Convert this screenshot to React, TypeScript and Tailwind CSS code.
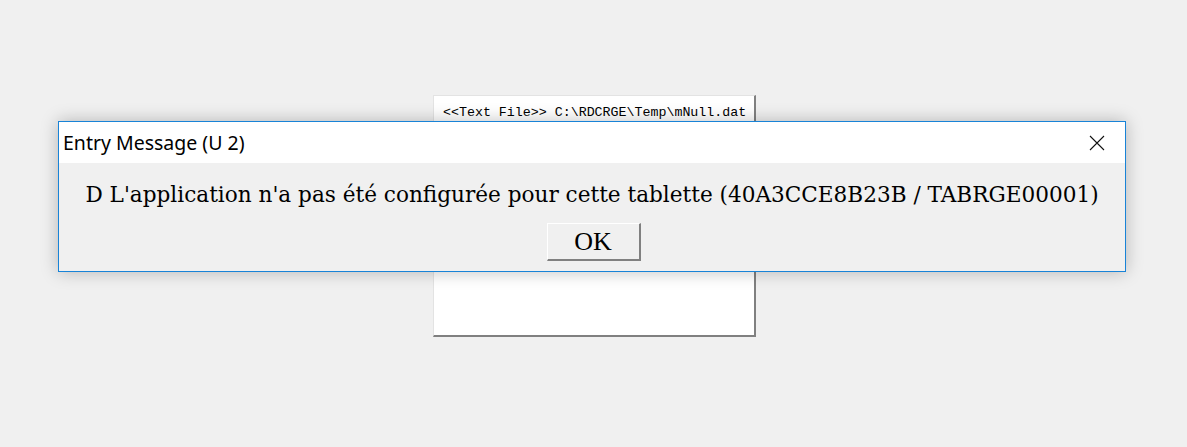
export default function App() {
  return (
    <div className="relative h-[447px] w-[1187px] overflow-hidden bg-[#f0f0f0]">
      {/* window behind the dialog */}
      <div className="ml-[433px] pt-[95px]">
        <div className="h-[242px] w-[323px] border-t border-l border-t-[#e3e3e3] border-l-[#e3e3e3] border-r-2 border-b-2 border-r-[#808080] border-b-[#808080] bg-white">
          <div
            className="pl-[9px] pt-[10px] text-[13.3px] leading-none text-[#000]"
            style={{ fontFamily: '"Liberation Mono", "Courier New", monospace' }}
          >
            {'<<Text File>> C:\\RDCRGE\\Temp\\mNull.dat'}
          </div>
        </div>
      </div>

      {/* message dialog */}
      <div className="absolute left-[58px] top-[121px] w-[1068px] border border-solid border-[#1883d7] bg-[#f0f0f0] shadow-[0_0_16px_rgba(0,0,0,0.25)]">
        <div className="flex h-[41px] items-center justify-between bg-white pl-[4px] pr-[20px]">
          <span
            className="text-[19.5px] text-black"
            style={{ fontFamily: '"Noto Sans", "Open Sans", sans-serif' }}
          >
            Entry Message (U 2)
          </span>
          <svg width="16" height="16" viewBox="0 0 16 16">
            <path d="M1 1 L15 15 M15 1 L1 15" stroke="#111" strokeWidth="1.1" fill="none" />
          </svg>
        </div>
        <div className="flex h-[108px] flex-col items-center pt-[19px]">
          <div
            className="text-[21.6px] leading-[26px] text-black whitespace-nowrap"
            style={{ fontFamily: '"DejaVu Serif", "Liberation Serif", serif' }}
          >
            D L'application n'a pas été configurée pour cette tablette (40A3CCE8B23B / TABRGE00001)
          </div>
          <button
            className="ml-[3px] mt-[15px] flex h-[38px] w-[94px] items-center justify-center border-t border-l border-t-white border-l-white border-r-2 border-b-2 border-r-[#808080] border-b-[#808080] bg-[#f0f0f0] text-[26px] text-black"
            style={{ fontFamily: '"Liberation Serif", serif' }}
          >
            OK
          </button>
        </div>
      </div>
    </div>
  );
}
